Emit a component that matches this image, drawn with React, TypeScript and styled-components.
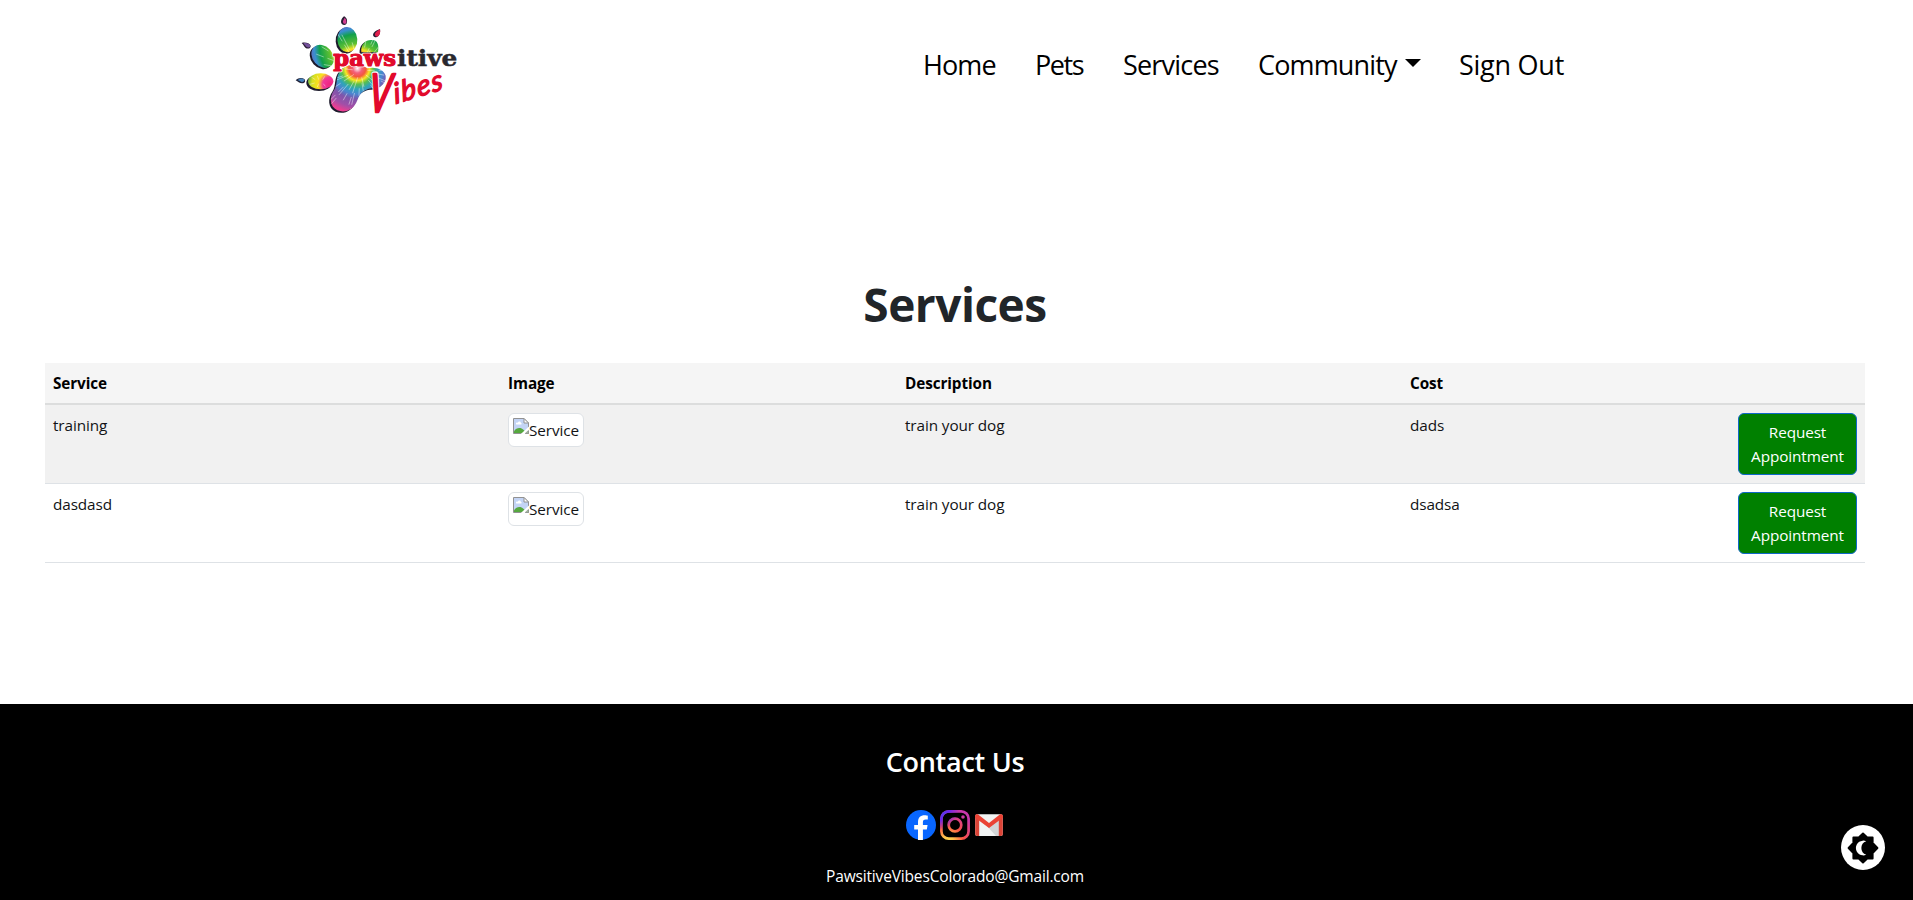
import React from "react";
import styled, { createGlobalStyle } from "styled-components";

const GlobalStyle = createGlobalStyle`
  *, *::before, *::after { box-sizing: border-box; }
  html, body { margin: 0; background: #fff; overflow: hidden; }
  body {
    font-family: "Open Sans", "Noto Sans", sans-serif;
    font-size: 15.3px;
    line-height: 24px;
    letter-spacing: -0.1px;
    color: #212529;
  }
`;

const Page = styled.div`
  display: flex;
  flex-direction: column;
  height: 900px;
  overflow: hidden;
`;

const Header = styled.header`
  display: flex;
  justify-content: space-between;
  align-items: center;
  height: 128px;
  padding: 0 346px 0 280px;
`;

const Brand = styled.a`
  display: block;
  height: 120px;
  margin-top: 2px;
`;

const Nav = styled.nav`
  display: flex;
  margin-top: 2px;
`;

const NavLink = styled.a<{ $width: number; $tracking: number }>`
  display: flex;
  width: ${(p) => p.$width}px;
  font-size: 27px;
  line-height: 42px;
  letter-spacing: ${(p) => p.$tracking}px;
  color: #000;
  white-space: nowrap;
`;

const Caret = styled.span`
  width: 0;
  height: 0;
  margin: 15px 0 0 8px;
  border-top: 8px solid #000;
  border-left: 8px solid transparent;
  border-right: 8px solid transparent;
`;

const Main = styled.main`
  height: 576px;
  padding: 147px 48px 0 45px;
`;

const Title = styled.h1`
  margin: 0 0 30px;
  font-size: 46px;
  font-weight: 700;
  line-height: 58px;
  letter-spacing: -0.5px;
  text-align: center;
`;

const Table = styled.table`
  width: 1820px;
  table-layout: fixed;
  border-collapse: separate;
  border-spacing: 0;
`;

const Col = styled.col<{ $width: number }>`
  width: ${(p) => p.$width}px;
`;

const HeadCell = styled.th`
  height: 42px;
  padding: 8px;
  border-bottom: 2px solid #dcdddd;
  background: #f5f5f5;
  color: #000;
  font-weight: 700;
  text-align: left;
`;

const Row = styled.tr<{ $striped: boolean }>`
  background: ${(p) => (p.$striped ? "#f1f1f1" : "#fff")};
`;

const Cell = styled.td`
  height: 79px;
  padding: 8px;
  border-bottom: 1px solid #dee2e6;
  color: #111315;
  vertical-align: top;
`;

const Thumbnail = styled.span`
  display: inline-flex;
  width: 76px;
  height: 34px;
  padding: 4px;
  border: 1px solid #dee2e6;
  border-radius: 6px;
  background: #fff;
  color: #111315;
`;

const RequestButton = styled.button`
  display: block;
  width: 119px;
  height: 62px;
  padding: 6px 12px;
  border: 1px solid #1068c8;
  border-radius: 6px;
  background: #008000;
  color: #fff;
  font: inherit;
  letter-spacing: inherit;
  text-align: center;
`;

const Footer = styled.footer`
  display: flex;
  flex: 1;
  flex-direction: column;
  align-items: center;
  padding: 41px 3px 0 0;
  background: #000;
  color: #fff;
`;

const FooterTitle = styled.h2`
  margin: 0 0 31px;
  font-size: 27px;
  font-weight: 600;
  line-height: 34px;
  letter-spacing: -0.28px;
`;

const Socials = styled.div`
  display: flex;
  gap: 4px;
  height: 30px;
  margin-bottom: 24px;
`;

const Email = styled.p`
  margin: 0;
  font-size: 15.5px;
  letter-spacing: -0.16px;
`;

const ThemeToggle = styled.button`
  position: fixed;
  right: 28px;
  bottom: 30px;
  display: flex;
  width: 44px;
  height: 45px;
  padding: 0;
  border: 0;
  border-radius: 50%;
  background: #fff;
  align-items: center;
  justify-content: center;
`;

const rays = Array.from({ length: 40 }, (_, i) => {
  const a = (i * Math.PI * 2) / 40 + (i % 3) * 0.04;
  const r0 = 22 + (i % 4) * 16;
  const r1 = r0 + 22 + ((i * 7) % 5) * 7;
  const r2 = r1 + 12;
  const at = (r: number) => `${240 + Math.cos(a) * r} ${196 + Math.sin(a) * r}`;
  return `M${at(r0)}L${at(r1)}M${at(r2)}L${at(r2 + 24)}`;
}).join("");

function Logo() {
  const toes = (
    <>
      <ellipse cx="202" cy="104" rx="30" ry="38" transform="rotate(-4 202 104)" />
      <ellipse cx="128" cy="154" rx="30" ry="38" transform="rotate(-42 128 154)" />
      <path d="M244 142C242 118 256 104 276 105C292 105 298 118 294 142Z" />
    </>
  );
  const palm = (
    <path d="M182 196C200 176 240 172 262 190C288 184 312 194 317 212C320 236 298 252 274 250C252 254 240 264 232 286C222 314 196 326 172 316C148 304 148 276 162 256C174 238 166 216 182 196Z" />
  );
  return (
    <svg width="190" height="120" viewBox="0 0 570 360" aria-label="Pawsitive Vibes">
      <defs>
        <radialGradient id="palm" gradientUnits="userSpaceOnUse" cx="232" cy="190" r="140">
          <stop offset="0" stopColor="#fff" />
          <stop offset="0.1" stopColor="#f2607c" />
          <stop offset="0.18" stopColor="#f4583e" />
          <stop offset="0.26" stopColor="#f8e824" />
          <stop offset="0.34" stopColor="#5cc04a" />
          <stop offset="0.44" stopColor="#2fa5b8" />
          <stop offset="0.55" stopColor="#4a86d0" />
          <stop offset="0.66" stopColor="#7f56ab" />
          <stop offset="0.82" stopColor="#a050a8" />
          <stop offset="0.95" stopColor="#ea3f92" />
        </radialGradient>
        <radialGradient id="toes" gradientUnits="userSpaceOnUse" cx="226" cy="206" r="158">
          <stop offset="0.38" stopColor="#f47b2c" />
          <stop offset="0.47" stopColor="#f6e626" />
          <stop offset="0.56" stopColor="#5fc032" />
          <stop offset="0.74" stopColor="#12a04c" />
          <stop offset="0.84" stopColor="#3a8fd0" />
          <stop offset="0.92" stopColor="#5f6fc4" />
          <stop offset="1" stopColor="#9a55b4" />
        </radialGradient>
        <radialGradient id="side" gradientUnits="userSpaceOnUse" cx="150" cy="238" r="72">
          <stop offset="0" stopColor="#f0247e" />
          <stop offset="0.3" stopColor="#f0389a" />
          <stop offset="0.5" stopColor="#fae01e" />
          <stop offset="0.75" stopColor="#d8e022" />
          <stop offset="1" stopColor="#3d9f54" />
        </radialGradient>
        <clipPath id="paw">
          {toes}
          {palm}
        </clipPath>
      </defs>
      <g fill="#1d1b2c" transform="translate(-5 4)">
        {toes}
        {palm}
        <ellipse cx="122" cy="230" rx="38" ry="24" />
      </g>
      <g fill="url(#toes)">{toes}</g>
      <g fill="url(#palm)">{palm}</g>
      <ellipse cx="122" cy="229" rx="38" ry="24" fill="url(#side)" />
      <path d="M94 216l12 8M90 238l14-4M112 212l4 12M134 214l-6 10M112 246l4-10M136 244l-6-8" stroke="#fff" strokeWidth="2" opacity="0.6" />
      <path d={rays} clipPath="url(#paw)" stroke="#fff" strokeWidth="2.6" opacity="0.5" />
      <path d="M192 34C201 38 204 49 199 57C194 62 184 60 183 51C183 43 188 38 192 34Z" fill="#2b1d35" />
      <path d="M194 38C200 44 201 52 197 56C192 58 188 54 189 48Z" fill="#d33f92" />
      <path d="M300 72C302 84 298 94 289 97C280 97 277 90 281 84C286 77 293 76 300 72Z" fill="#2b1d35" />
      <path d="M300 72C302 84 299 92 292 95C285 95 283 89 286 84C290 78 295 77 300 72Z" fill="#e01f4c" />
      <path d="M65 114C76 111 88 114 92 122C93 130 84 133 77 129C71 125 71 118 65 114Z" fill="#2b1d35" />
      <path d="M70 115C78 113 88 115 91 122C91 128 84 129 79 125Z" fill="#75519b" />
      <path d="M47 226C55 217 66 217 73 222C78 228 75 235 66 235C58 235 54 229 47 226Z" fill="#20233b" />
      <path d="M53 225C60 219 67 219 72 223C75 229 70 231 65 231Z" fill="#4584bd" />
      <text x="160" y="184" fontFamily="DejaVu Serif, serif" fontSize="64" fontWeight="700" textLength="188" lengthAdjust="spacingAndGlyphs" fill="#e20a2c" stroke="#fff" strokeWidth="7" strokeLinejoin="round" paintOrder="stroke">paws</text>
      <text x="160" y="184" fontFamily="DejaVu Serif, serif" fontSize="64" fontWeight="700" textLength="188" lengthAdjust="spacingAndGlyphs" fill="#e20a2c" stroke="#e20a2c" strokeWidth="3" strokeLinejoin="round">paws</text>
      <text x="351" y="184" fontFamily="DejaVu Serif, serif" fontSize="68" fontWeight="700" textLength="181" lengthAdjust="spacingAndGlyphs" fill="#29282e" stroke="#29282e" strokeWidth="1.5">itive</text>
      <g fill="#e20a2c" stroke="#e20a2c" strokeWidth="4" strokeLinejoin="round" fontFamily="Lato, sans-serif" fontStyle="italic" fontWeight="400">
        <text transform="translate(262 320) skewX(-6)" fontSize="160" textLength="68" lengthAdjust="spacingAndGlyphs" stroke="#fff" strokeWidth="14" paintOrder="stroke">V</text>
        <text transform="translate(262 320) skewX(-6)" fontSize="160" textLength="68" lengthAdjust="spacingAndGlyphs" strokeWidth="7">V</text>
        <text transform="translate(346 297) rotate(-17) skewX(-8)" fontSize="86" textLength="152" lengthAdjust="spacing">ibes</text>
      </g>
    </svg>
  );
}

function BrokenImage() {
  return (
    <svg width="16" height="16" viewBox="0 0 16 16" aria-hidden="true">
      <path d="M.5 .5H11L15.5 5V15.5H.5Z" fill="#c3d4f5" stroke="#929292" />
      <path d="M3 6.2C2.4 4.6 4.3 4 4.8 4.8C5.4 3 8 3.3 7.8 5C9 5 9 6.6 8 6.6H3.5Z" fill="#fff" />
      <path d="M1 15V13.2C3.5 9.8 7.2 8.8 11 12.2L13 15Z" fill="#56a83f" />
      <path d="M11 .5V5H15.5Z" fill="#fff" stroke="#929292" strokeLinejoin="round" />
      <path d="M7.5 16.3L16.3 8.2V12L12 16.3Z" fill="#fff" />
      <path d="M12.2 15.5H15.5V12.4Z" fill="#9fbd98" stroke="#929292" strokeWidth=".7" />
    </svg>
  );
}

function FacebookIcon() {
  return (
    <svg width="30" height="30" viewBox="0 0 30 30" aria-label="Facebook">
      <circle cx="15" cy="15" r="15" fill="#0866ff" />
      <path d="M12 30V19.5H8.2V15H12V12.4C12 7.5 14.3 5.3 18.8 5.3C19.9 5.3 21.2 5.5 21.8 5.7V9.6H19.8C17.6 9.6 16.9 10.5 16.9 12.5V15H21.6L20.8 19.5H16.9V30Z" fill="#fff" />
    </svg>
  );
}

function InstagramIcon() {
  return (
    <svg width="30" height="30" viewBox="0 0 30 30" aria-label="Instagram">
      <defs>
        <radialGradient id="insta" gradientUnits="userSpaceOnUse" cx="8" cy="31" r="31">
          <stop offset="0" stopColor="#ffdb4d" />
          <stop offset="0.18" stopColor="#fdc04c" />
          <stop offset="0.5" stopColor="#fb5245" />
          <stop offset="0.95" stopColor="#c837ab" />
        </radialGradient>
        <radialGradient id="violet" gradientUnits="userSpaceOnUse" cx="0" cy="1" r="19">
          <stop offset="0" stopColor="#4b45e6" />
          <stop offset="0.45" stopColor="#6a25ee" />
          <stop offset="1" stopColor="#6a25ee" stopOpacity="0" />
        </radialGradient>
      </defs>
      {["url(#insta)", "url(#violet)"].map((paint) => (
        <g key={paint} fill="none" stroke={paint} strokeWidth="2.7">
          <rect x="1.4" y="1.4" width="27.2" height="27.2" rx="7.4" />
          <circle cx="15" cy="15" r="6.3" />
          <circle cx="23" cy="7" r="1.8" fill={paint} stroke="none" />
        </g>
      ))}
    </svg>
  );
}

function GmailIcon() {
  return (
    <svg width="30" height="30" viewBox="0 0 30 30" aria-label="Gmail">
      <rect x="1.2" y="4.3" width="27.6" height="21.8" rx="2" fill="#f1f3f3" />
      <path d="M15 17L25 9V26.1H22L12 15Z" fill="#d2d5d6" />
      <path d="M1.2 6.3C1.2 5.1 2 4.3 3.2 4.3L5.2 8V26.1H3.2C2 26.1 1.2 25.3 1.2 24.1ZM28.8 6.3C28.8 5.1 28 4.3 26.8 4.3L24.8 8V26.1H26.8C28 26.1 28.8 25.3 28.8 24.1Z" fill="#db4437" />
      <path d="M1.2 6.4C1.2 4.6 3.2 3.8 4.5 4.8L15 13L25.5 4.8C26.8 3.8 28.8 4.6 28.8 6.4V7.8L15 18L1.2 7.8Z" fill="#ea4335" />
    </svg>
  );
}

function MoonIcon() {
  return (
    <svg width="32" height="32" viewBox="0 0 32 32" aria-hidden="true">
      <path d="M16 1.6L20.2 5.4H25.6V11L30.4 16L25.6 21V26.6H20.2L16 30.4L11.8 26.6H6.4V21L1.6 16L6.4 11V5.4H11.8Z" fill="#000" stroke="#000" strokeWidth="2" strokeLinejoin="round" />
      <path d="M19.2 9.2A7.4 7.4 0 1 0 19.2 22.8A7.2 7.2 0 0 1 19.2 9.2Z" fill="#fff" />
    </svg>
  );
}

const links = [
  { label: "Home", width: 112, tracking: -0.9 },
  { label: "Pets", width: 88, tracking: -1.4 },
  { label: "Services", width: 135, tracking: -0.8 },
  { label: "Community", width: 201, tracking: -0.85, menu: true },
  { label: "Sign Out", width: 108, tracking: -0.25 },
];

const services = [
  { name: "training", description: "train your dog", cost: "dads" },
  { name: "dasdasd", description: "train your dog", cost: "dsadsa" },
];

export default function App() {
  return (
    <Page>
      <GlobalStyle />
      <Header>
        <Brand>
          <Logo />
        </Brand>
        <Nav>
          {links.map((l) => (
            <NavLink key={l.label} $width={l.width} $tracking={l.tracking}>
              {l.label}
              {l.menu && <Caret />}
            </NavLink>
          ))}
        </Nav>
      </Header>
      <Main>
        <Title>Services</Title>
        <Table>
          <colgroup>
            {[455, 397, 505, 328, 135].map((w) => (
              <Col key={w} $width={w} />
            ))}
          </colgroup>
          <thead>
            <tr>
              {["Service", "Image", "Description", "Cost", ""].map((h) => (
                <HeadCell key={h}>{h}</HeadCell>
              ))}
            </tr>
          </thead>
          <tbody>
            {services.map((s, i) => (
              <Row key={s.name} $striped={i % 2 === 0}>
                <Cell>{s.name}</Cell>
                <Cell>
                  <Thumbnail>
                    <BrokenImage />
                    <span>Service</span>
                  </Thumbnail>
                </Cell>
                <Cell>{s.description}</Cell>
                <Cell>{s.cost}</Cell>
                <Cell>
                  <RequestButton>Request Appointment</RequestButton>
                </Cell>
              </Row>
            ))}
          </tbody>
        </Table>
      </Main>
      <Footer>
        <FooterTitle>Contact Us</FooterTitle>
        <Socials>
          <FacebookIcon />
          <InstagramIcon />
          <GmailIcon />
        </Socials>
        <Email>PawsitiveVibesColorado@Gmail.com</Email>
      </Footer>
      <ThemeToggle aria-label="Toggle dark mode">
        <MoonIcon />
      </ThemeToggle>
    </Page>
  );
}
